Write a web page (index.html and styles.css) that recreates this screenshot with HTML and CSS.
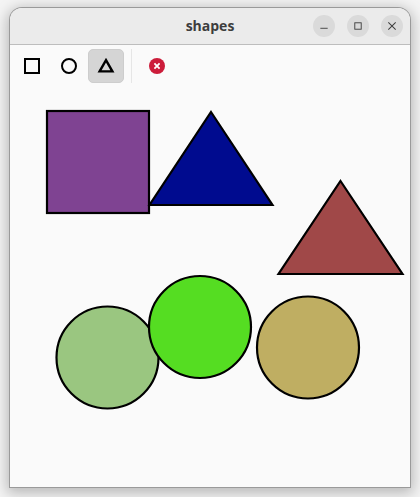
FILE: index.html
```html
<!DOCTYPE html>
<html>
  <head>
    <title>shapes</title>
    <link rel="stylesheet" href="styles.css">
  </head>

  <body>
    <div class="window">
      <div class="titlebar">
        <span class="title">shapes</span>
        <div class="window-buttons">
          <button class="win-btn">
            <svg width="24" height="24" viewBox="0 0 24 24"><path d="M8 14.500h8" stroke="#3d3d3d" stroke-width="1" fill="none"/></svg>
          </button>
          <button class="win-btn">
            <svg width="24" height="24" viewBox="0 0 24 24"><rect x="8.500" y="8.500" width="7" height="7" stroke="#3d3d3d" stroke-width="1" fill="none"/></svg>
          </button>
          <button class="win-btn">
            <svg width="24" height="24" viewBox="0 0 24 24"><path d="M8 8l8 8M16 8l-8 8" stroke="#3d3d3d" stroke-width="1.100" fill="none"/></svg>
          </button>
        </div>
      </div>

      <div class="toolbar">
        <button class="tool">
          <svg width="18" height="18" viewBox="0 0 18 18"><rect x="2" y="2" width="14" height="14" fill="none" stroke="#000" stroke-width="2"/></svg>
        </button>
        <button class="tool">
          <svg width="18" height="18" viewBox="0 0 18 18"><circle cx="9" cy="9" r="7" fill="none" stroke="#000" stroke-width="2"/></svg>
        </button>
        <button class="tool active">
          <svg width="18" height="18" viewBox="0 0 18 18"><path d="M9 3.200L15.400 14.400H2.600Z" fill="none" stroke="#000" stroke-width="2.400"/></svg>
        </button>
        <div class="separator"></div>
        <button class="tool">
          <svg width="18" height="18" viewBox="0 0 18 18">
            <circle cx="9" cy="9" r="8" fill="#cc1c3a"/>
            <path d="M6.400 6.400l5.200 5.200M11.600 6.400l-5.200 5.200" stroke="#fff" stroke-width="1.800" fill="none"/>
          </svg>
        </button>
      </div>

      <svg class="canvas" width="400" height="401" viewBox="10 86 400 401">
        <g stroke="#000" stroke-width="2.200">
          <rect x="47" y="111" width="102" height="102" fill="#7f4392"/>
          <path d="M211 112L272.500 205H149.500Z" fill="#000b8f"/>
          <path d="M340.500 181L402.500 274H278.500Z" fill="#a04848"/>
          <circle cx="107.500" cy="357.500" r="51" fill="#9ac680"/>
          <circle cx="200" cy="327" r="51" fill="#55dd22"/>
          <circle cx="308" cy="347.500" r="51" fill="#bfae62"/>
        </g>
      </svg>
    </div>
  </body>
</html>
```

FILE: styles.css
```css
html,
body {
  height: 100%;
}

body {
  margin: 0;
  padding: 8px 10px 10px;
  box-sizing: border-box;
  background-color: #f4f4f4;
  overflow: hidden;
}

.window {
  width: 400px;
  height: 479px;
  display: flex;
  flex-direction: column;
  background-color: #fafafa;
  border-radius: 12px 12px 0 0;
  box-shadow: 0 0 0 1px #9a9a9a, 0 3px 14px 3px rgba(0, 0, 0, 0.25);
  overflow: hidden;
}

.titlebar {
  height: 37px;
  flex: none;
  position: relative;
  display: flex;
  align-items: center;
  justify-content: flex-end;
  box-sizing: border-box;
  padding: 0 7px 0 0;
  background-color: #ebebeb;
  border-bottom: 1px solid #bdbdbd;
}

.title {
  position: absolute;
  left: 0;
  right: 0;
  top: 9px;
  text-align: center;
  font-family: "Open Sans", "Noto Sans", sans-serif;
  font-size: 14px;
  line-height: 18px;
  font-weight: 700;
  color: #3d3d3d;
}

.window-buttons {
  display: flex;
  gap: 12px;
}

.win-btn {
  width: 22px;
  height: 22px;
  padding: 0;
  border: none;
  border-radius: 50%;
  background-color: #dadada;
  display: flex;
  align-items: center;
  justify-content: center;
}

.toolbar {
  height: 41px;
  flex: none;
  display: flex;
  align-items: flex-start;
  gap: 1px;
  box-sizing: border-box;
  padding: 4px 4px 0;
}

.tool {
  width: 36px;
  height: 34px;
  padding: 0;
  border: 1px solid transparent;
  border-radius: 5px;
  background: none;
  display: flex;
  align-items: center;
  justify-content: center;
}

.tool.active {
  background-color: #d5d5d5;
  border-color: #cdcdcd;
}

.separator {
  width: 1px;
  height: 34px;
  margin: 0 6px;
  background-color: #e6e6e6;
}

.canvas {
  display: block;
  flex: none;
}
```
